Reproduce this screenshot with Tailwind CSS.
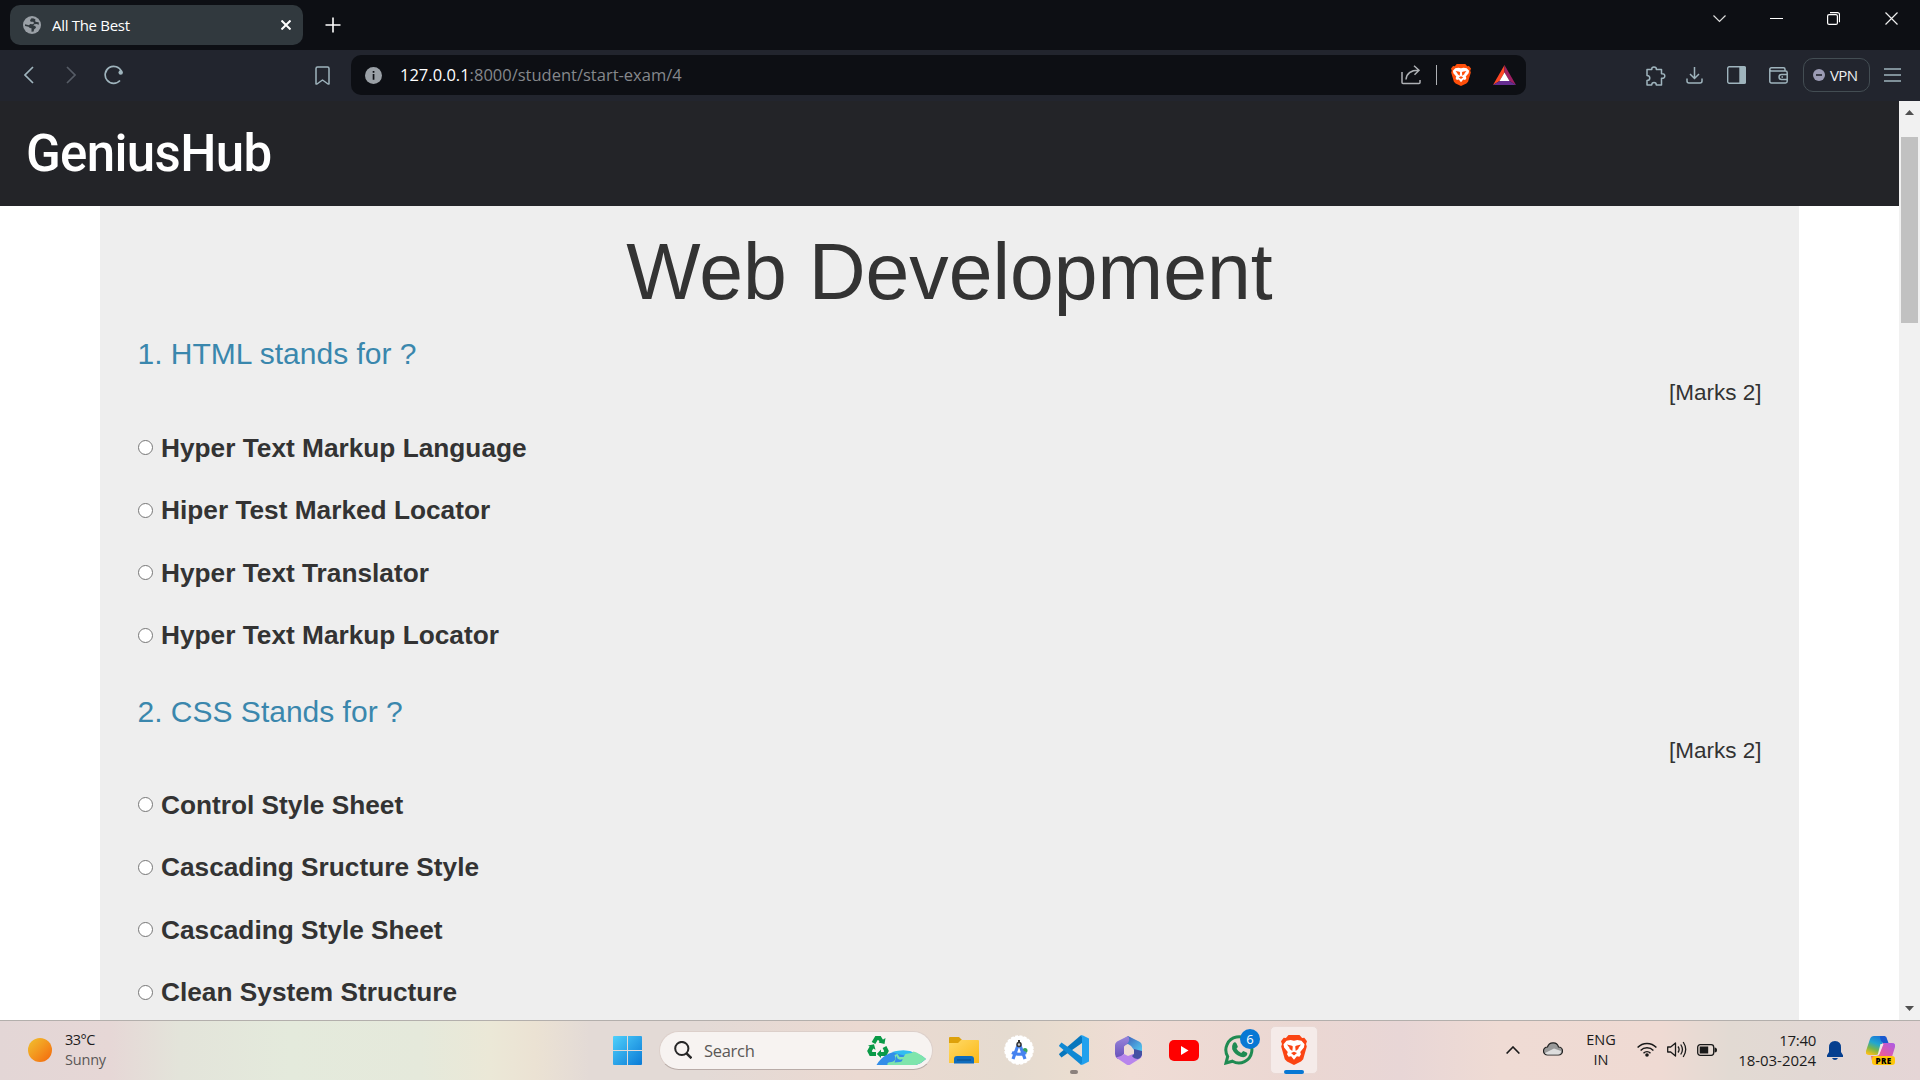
<!DOCTYPE html>
<html lang="en">
<head>
<meta charset="utf-8">
<title>All The Best</title>
<script src="https://cdn.jsdelivr.net/npm/@tailwindcss/browser@4"></script>
</head>
<body class="w-[1920px] h-[1080px] overflow-hidden flex flex-col bg-white font-['Open_Sans',sans-serif]">

<!-- Tab strip -->
<div class="h-[50px] shrink-0 bg-[#0d0f14] flex items-start">
  <div class="mt-[5px] ml-[10px] w-[293px] h-10 rounded-[10px] bg-[#31393e] flex items-center pl-[13px] pr-3">
    <svg class="w-[18px] h-[18px]" viewBox="0 0 18 18"><circle cx="9" cy="9" r="9" fill="#9aa0a6"/><path fill="#31393e" d="M8.500 2.200L7 4.200l.7 1.600h2.500l1 1.500-1.700 1-2.300-.2L6 9.200l-4-.9v1.600l3.500.8 1.300 1.300 1.700.3v3.500l2.200-.4.3-2 2-1.700-.7-1.700-2-.5 1-1.200 2.200-.3 2.400.8-.2-2.500-2.200-.4L12 5.300l.5-1.800-1.600-1z"/></svg>
    <div class="ml-[11px] text-[15px] leading-5 tracking-[-0.300px] text-white">All The Best</div>
    <svg class="ml-auto w-[10px] h-[10px]" viewBox="0 0 10 10" stroke="#fff" stroke-width="2"><path d="M.5.5l9 9m0-9l-9 9"/></svg>
  </div>
  <svg class="mt-[17px] ml-[21.5px] w-4 h-4" viewBox="0 0 16 16" stroke="#fff" stroke-width="1.600"><path d="M8 .5v15M.5 8h15"/></svg>
  <svg class="mt-[15px] ml-auto w-[13px] h-2" viewBox="0 0 13 8" fill="none" stroke="#ddd" stroke-width="1.200"><path d="M.5.5l6 6 6-6"/></svg>
  <div class="mt-[18px] ml-[44px] w-[13px] h-px bg-white"></div>
  <svg class="mt-3 ml-[44px] w-[13px] h-[13px]" viewBox="0 0 13 13" fill="none" stroke="#fff" stroke-width="1.200"><rect x=".6" y="2.600" width="9.800" height="9.800" rx="1.500"/><path d="M3 .6h7.500a2 2 0 0 1 2 2v7.700"/></svg>
  <svg class="mt-3 ml-[45px] mr-[22px] w-[13px] h-[13px]" viewBox="0 0 13 13" stroke="#eee" stroke-width="1.200"><path d="M.5.500l12 12m0-12l-12 12"/></svg>
</div>

<!-- Toolbar -->
<div class="h-[51px] shrink-0 bg-[#22252e] flex items-center pb-px text-[#9fb4bd]">
  <svg class="ml-6 w-[10px] h-[18px]" viewBox="0 0 10 18" fill="none" stroke="currentColor" stroke-width="1.700"><path d="M9 1L1 9l8 8"/></svg>
  <svg class="ml-8 w-[10px] h-[18px]" viewBox="0 0 10 18" fill="none" stroke="#565c66" stroke-width="1.700"><path d="M1 1l8 8-8 8"/></svg>
  <svg class="ml-7 w-5 h-5" viewBox="0 0 20 20" fill="none" stroke="currentColor" stroke-width="1.700"><path d="M17.500 6.500A8.500 8.500 0 1 0 16 15.500"/><circle cx="16.700" cy="7.500" r="2.200" fill="currentColor" stroke="none"/></svg>
  <svg class="ml-[191px] w-[15px] h-[19px]" viewBox="0 0 15 19" fill="none" stroke="currentColor" stroke-width="1.500" stroke-linejoin="round"><path d="M1 2.500Q1 1 2.500 1h10Q14 1 14 2.500V18h-1L7.500 14 2 18H1z"/></svg>
  <div class="ml-[21px] w-[1175px] h-10 rounded-[10px] bg-[#0d0f14] flex items-center">
    <svg class="ml-[14px] w-[17px] h-[17px]" viewBox="0 0 17 17"><circle cx="8.500" cy="8.500" r="8.500" fill="#9aa0a6"/><path fill="#0d0f14" d="M7.700 4h1.700v1.700H7.700zM7.700 7h1.700v5.800H7.700z"/></svg>
    <div class="ml-[18px] text-[16.5px] leading-6 text-[#85888c]"><span class="text-white">127.0.0.1</span>:8000/student/start-exam/4</div>
    <svg class="ml-auto w-5 h-5" viewBox="0 0 20 20" fill="none" stroke="#aeb1b5" stroke-width="1.500"><path d="M1 7v10.500q0 1 1 1h16q1 0 1-1V15M5 14.500C5.500 9 9 5.200 17.500 5.200M13 .8l5 4.400-4.500 4.500"/></svg>
    <div class="ml-[15px] w-px h-5 bg-[#aeb1b5]"></div>
    <svg class="ml-[14px] w-5 h-[22px]" viewBox="0 0 26 29" preserveAspectRatio="none" fill="#ff4f0a">
      <path d="M7.500 0h11l2.600 3 2.200-.4L26 6l-1 2.800.8 2.400-3.600 12.300-2.200 2.200L13 29l-7-3.300-2.200-2.200L.2 11.200 1 8.800 0 6l2.700-3.400 2.200.4z"/>
      <path fill="#fff" d="M13 5.600l3.300-.7 4.200.6 3 3.500-.6 3.200-3.700 4.300.8 2.200-1.600 2.300-2.500-.5L13 24l-2.900-3.500-2.500.5L6 18.700l.8-2.200-3.700-4.300L2.500 9l3-3.500 4.200-.6z"/>
      <path d="M6 9.300l5 1 .8.800-.5 4.300-2.600-1.800-.3-1.200zM20 9.300l-5 1-.8.800.5 4.300 2.600-1.800.3-1.200zM10 17.500l3-1.300 3 1.300-3 2.200z"/>
    </svg>
    <svg class="ml-[22px] mr-[10px] w-[23px] h-5" viewBox="0 0 23 20"><path fill="#ff4724" d="M11.500 0L0 20l6.500-4 5-8.500z"/><path fill="#9e1f63" d="M11.500 0L23 20l-6.500-4-5-8.500z"/><path fill="#662d91" d="M0 20h23l-6.500-4h-10z"/><path fill="#fff" d="M11.500 7.500l5 8.500h-10z"/></svg>
  </div>
  <svg class="ml-[119px] mt-px w-[21px] h-5" viewBox="0 0 21 20" fill="none" stroke="currentColor" stroke-width="1.500" stroke-linejoin="round"><path d="M2 3.500h4.800C6.500 1.800 7.500 1 9 1s2.600.8 2.300 2.500h5.200v4.200c2-.2 3.300.7 3.300 2.300s-1.300 2.500-3.300 2.300V19h-5.200c0-1.600-.8-2.400-2.300-2.400S6.800 17.400 6.700 19H2v-4.500c1.800 0 2.800-.9 2.800-2.500S3.800 9.600 2 9.500z"/></svg>
  <svg class="ml-5 w-[17px] h-[17px]" viewBox="0 0 17 17" fill="none" stroke="currentColor" stroke-width="1.500"><path d="M8.500 0v11M4 7l4.500 4.500L13 7M1 11.500v2.500q0 2 2 2h11q2 0 2-2v-2.500"/></svg>
  <svg class="ml-6 w-[19px] h-[18px]" viewBox="0 0 19 18" fill="none" stroke="currentColor" stroke-width="1.400"><rect x=".7" y=".7" width="17.600" height="16.600" rx="1.500"/><path d="M13 1h4.500q.8 0 .8.800v14.400q0 .8-.8.800H13z" fill="currentColor"/></svg>
  <svg class="ml-[23px] w-[19px] h-[17px]" viewBox="0 0 19 17" fill="none" stroke="currentColor" stroke-width="1.500"><path d="M.8 2.500Q.8 4 2.500 4H16.500q1.700 0 1.700 1.700v8.600q0 1.700-1.700 1.700H2.500Q.8 16 .8 14.300V2.500Q.8.8 2.500.8H14.500q1.500 0 1.500 1.500V4M18 7.500h-5.500a2.500 2.500 0 0 0 0 5H18M12.500 10h1.500"/></svg>
  <div class="ml-[15px] w-[67px] h-[34px] rounded-[10px] border border-[#434d53] flex items-center pl-[9px]">
    <svg class="w-3 h-3" viewBox="0 0 12 12"><circle cx="6" cy="6" r="6" fill="#9b9bb4"/><path d="M3 6h6" stroke="#22252e" stroke-width="1.600"/></svg>
    <span class="ml-[5px] text-[15px] leading-5 text-[#eceef0] tracking-[-0.600px]">VPN</span>
  </div>
  <svg class="ml-[14px] w-[17px] h-[14px]" viewBox="0 0 17 14" stroke="currentColor" stroke-width="1.500"><path d="M0 1h17M0 7h17M0 13h17"/></svg>
</div>

<!-- Page viewport -->
<div class="h-[919px] shrink-0 flex">
  <div class="w-[1899px] h-[919px] overflow-hidden font-['Liberation_Sans',Arial,sans-serif] text-[#333]">
    <div class="h-[105px] bg-[#232428] flex items-center pl-[26px]">
      <div class="font-[Roboto] font-medium text-[51px] leading-[60px] tracking-[-0.650px] text-white">GeniusHub</div>
    </div>
    <div class="mx-[100px] h-[814px] px-[37.5px] bg-[#eee]">
      <h1 class="h-[130px] text-center text-[78.75px] leading-[132px]">Web Development</h1>
      <div class="h-[358px]">
        <h3 class="text-[30px] leading-[35px] text-[#3a87ad]">1. HTML stands for ?</h3>
        <div class="text-right text-[22.5px] leading-[44px] mb-[1.300px]">[Marks 2]</div>
        <label class="h-[62.5px] flex items-center font-bold text-[26.25px] leading-[30px]"><span class="w-[15px] h-[15px] mr-[8.5px] rounded-full border border-[#767676] bg-white"></span>Hyper Text Markup Language</label>
        <label class="h-[62.5px] flex items-center font-bold text-[26.25px] leading-[30px]"><span class="w-[15px] h-[15px] mr-[8.5px] rounded-full border border-[#767676] bg-white"></span>Hiper Test Marked Locator</label>
        <label class="h-[62.5px] flex items-center font-bold text-[26.25px] leading-[30px]"><span class="w-[15px] h-[15px] mr-[8.5px] rounded-full border border-[#767676] bg-white"></span>Hyper Text Translator</label>
        <label class="h-[62.5px] flex items-center font-bold text-[26.25px] leading-[30px]"><span class="w-[15px] h-[15px] mr-[8.5px] rounded-full border border-[#767676] bg-white"></span>Hyper Text Markup Locator</label>
      </div>
      <div class="h-[358px]">
        <h3 class="text-[30px] leading-[35px] text-[#3a87ad]">2. CSS Stands for ?</h3>
        <div class="text-right text-[22.5px] leading-[44px] mb-[0.600px]">[Marks 2]</div>
        <label class="h-[62.5px] flex items-center font-bold text-[26.25px] leading-[30px]"><span class="w-[15px] h-[15px] mr-[8.5px] rounded-full border border-[#767676] bg-white"></span>Control Style Sheet</label>
        <label class="h-[62.5px] flex items-center font-bold text-[26.25px] leading-[30px]"><span class="w-[15px] h-[15px] mr-[8.5px] rounded-full border border-[#767676] bg-white"></span>Cascading Sructure Style</label>
        <label class="h-[62.5px] flex items-center font-bold text-[26.25px] leading-[30px]"><span class="w-[15px] h-[15px] mr-[8.5px] rounded-full border border-[#767676] bg-white"></span>Cascading Style Sheet</label>
        <label class="h-[62.5px] flex items-center font-bold text-[26.25px] leading-[30px]"><span class="w-[15px] h-[15px] mr-[8.5px] rounded-full border border-[#767676] bg-white"></span>Clean System Structure</label>
      </div>
    </div>
  </div>
  <div class="w-[21px] bg-[#f1f1f1] flex flex-col items-center pr-px">
    <svg class="mt-[9px] w-[9px] h-[5px]" viewBox="0 0 9 5" fill="#505050"><path d="M4.500 0L9 5H0z"/></svg>
    <div class="mt-[22px] w-[17px] h-[186px] bg-[#c1c1c1]"></div>
    <svg class="mt-auto mb-[9px] w-[9px] h-[5px]" viewBox="0 0 9 5" fill="#505050"><path d="M4.500 5L9 0H0z"/></svg>
  </div>
</div>

<!-- Taskbar -->
<div class="h-[60px] shrink-0 border-t border-[#b3afac] flex items-center pb-px bg-[linear-gradient(90deg,#e3d6d6_0px,#e6d7d6_110px,#e3e4da_180px,#e4eadc_290px,#e5e9db_420px,#ebe8d7_490px,#ebe2d3_535px,#e3dad6_590px,#e3dad6_700px,#ebd9d1_860px,#e5dbd0_1010px,#eaddd0_1070px,#efdcd5_1130px,#ebd7d2_1300px,#e8d6d6_1400px,#efdbd4_1500px,#efdad3_1660px,#e2dad3_1730px,#e2d8d4_1810px,#e5d5d6_1920px)]">
  <div class="ml-7 w-6 h-6 rounded-full bg-linear-to-br from-[#efc22f] to-[#f2640a]"></div>
  <div class="ml-[13px] w-[60px] text-[14.5px] leading-5 tracking-[-0.5px] text-[#1c1c1c]"><div>33°C</div><div class="text-[#5a5757] tracking-[-0.200px]">Sunny</div></div>
  <svg class="ml-[488px] w-[29px] h-[29px]" viewBox="0 0 29 29"><defs><linearGradient id="win" x1="0" y1="0" x2="1" y2="1" gradientUnits="objectBoundingBox"><stop stop-color="#4fd0fb"/><stop offset="1" stop-color="#0a7ad6"/></linearGradient></defs><path fill="url(#win)" d="M1 0h13v14H0V1q0-1 1-1zM15 0h13q1 0 1 1v13H15zM0 15h14v14H1q-1 0-1-1zM15 15h14v13q0 1-1 1H15z"/></svg>
  <div class="ml-[17px] w-[274px] h-[39px] rounded-full bg-[#f7f3f1] border border-[#dccfca] border-b-[#b9aca8] flex items-center">
    <svg class="ml-[14px] w-[18px] h-[18px]" viewBox="0 0 18 18" fill="none" stroke="#262626" stroke-width="2"><circle cx="7.800" cy="7.500" r="6.600"/><path d="M12.500 12.300l5 5" stroke-width="2.500"/></svg>
    <span class="ml-3 mt-px text-[16.5px] leading-6 tracking-[-0.300px] text-[#5b5856]">Search</span>
    <svg class="ml-auto mr-[6px] w-[59px] h-8" viewBox="0 0 59 32">
      <g fill="none" stroke="#0a9a47" stroke-width="4.200"><path d="M6.500 9L9.500 4h3L15 8"/><path d="M17.500 13l2 4-1.500 3h-5"/><path d="M9 20H4l-1.500-3L5 12.500"/></g>
      <path fill="#0a9a47" d="M11.500 8.500l6 1.500 1-6zM14 15.500L9.800 20l4.200 4zM1 11.500l6-1.300 1.500 5.600z"/>
      <path fill="#338ee8" d="M9.500 31Q17 18 33 17 49 16 59 25q-4 4-10 6z"/><path fill="#32bdf0" d="M25 18q14-4 23 1l-8 3-9-2z"/>
      <path fill="#7fe5ac" d="M20.500 31q-1-3 4-3 4-1 4-4l-1-3 3-1 2 3 4 0 2-3 6-1 2-1.500q6 1.500 12.500 7.500-4 4-10 6z"/><path fill="#338ee8" d="M29.500 21.500l1 3q2 2 5 .5 0 3-3 3l-5 .5 1-3z"/>
    </svg>
  </div>
  <svg class="ml-4 w-[30px] h-[27px]" viewBox="0 0 30 27"><defs><linearGradient id="fol" x1="0" y1="0" x2="1" y2="1"><stop stop-color="#ffda67"/><stop offset="1" stop-color="#fbb817"/></linearGradient></defs><path fill="#dda10b" d="M0 1q0-1 1-1h9l3 3v4H0z"/><path fill="url(#fol)" d="M0 6h9l3-3h17q1 0 1 1v22H0z"/><path fill="#0f6cbd" d="M5 26.500V22q0-3 3-3h14q3 0 3 3v4.500z"/><path fill="#0a4a85" d="M8 22.500h14v1H8z"/></svg>
  <svg class="ml-[25px] w-[30px] h-[30px]" viewBox="0 0 30 30"><circle cx="15" cy="15" r="14" fill="#fff" stroke="#fff" stroke-width="1.500" stroke-dasharray="3 1.400"/><circle cx="21" cy="15.500" r="2.500" fill="#3ba55c"/><path d="M14.500 9L9 24M15.500 9L21 24M8 17.500q7 3.500 14 0" fill="none" stroke="#4683f0" stroke-width="3.200"/><path d="M15 5v3" stroke="#333" stroke-width="2"/><circle cx="15" cy="9.500" r="2" fill="#ccc" stroke="#333" stroke-width="1.500"/></svg>
  <div class="relative ml-[25px] w-[30px] h-[30px]">
    <svg class="w-[30px] h-[30px]" viewBox="0 0 30 30"><path fill="#0877bd" d="M0 19.500l2.500 3L23 8V.5L21 1 .5 18.500z"/><path fill="#1089d4" d="M0 10.500l2.500-3L23 22v7.500L21 29 .5 11.500z"/><path fill="#22a1ee" d="M21 29.500Q22.500 30 24 29.500l6-3v-23l-6-3Q22.500 0 21 .5l2 1.500v26z"/></svg>
    <div class="absolute left-[11px] top-[35px] w-2 h-1 rounded-full bg-[#8b817c]"></div>
  </div>
  <svg class="ml-[26px] w-[27px] h-[29px]" viewBox="0 0 27 29"><defs><linearGradient id="ma" x1="0" y1="0" x2="0" y2="1"><stop stop-color="#9a86dc"/><stop offset="1" stop-color="#6650b8"/></linearGradient><linearGradient id="mb" x1="0" y1="0" x2="1" y2="1"><stop stop-color="#3c56b4"/><stop offset="1" stop-color="#56d2f5"/></linearGradient></defs><path fill="url(#mb)" d="M13 0l12 6q2 1.500 2 4v7l-8-3-3-4-3-2-4 1V3z"/><path fill="url(#ma)" d="M13 0q3 4-1 8l-3 2.500V18L3 23Q0 21 0 18V9q0-2 2-3.500z"/><path fill="#b885ec" d="M1 21.500q5-.5 8-3.500l4 2 5-2 9-2v3q0 2-2 3.500l-9.500 6q-2 1-4 0z"/><path fill="#4551a3" d="M19 13l8 2v4q-1 3-4 4-4 0-6-3l2-2z"/></svg>
  <svg class="ml-[27px] w-[30px] h-[21px]" viewBox="0 0 30 21"><rect width="30" height="21" rx="5" fill="#f00"/><path fill="#fff" d="M12 6l7.500 4.500L12 15z"/></svg>
  <div class="relative ml-[25px] w-[30px] h-[30px]">
    <svg class="w-[30px] h-[30px]" viewBox="0 0 30 30"><path fill="none" stroke="#1f8b52" stroke-width="3" d="M2 28l1.700-6.500A13 13 0 1 1 8.500 26.200z"/><path fill="#1f8b52" d="M9 8.500q2-2.500 3.500 0l1.300 3q0 1-1.300 2.200 1.800 3 4.700 4.300l2-2 3.500 1.500q1.500 1 0 3-2 2.500-6 1.200-6-2-8.500-7.500Q7.500 11 9 8.500z"/></svg>
    <div class="absolute left-4 -top-[6px] w-5 h-5 rounded-full bg-[#0878d4] text-white text-[13px] leading-5 text-center">6</div>
  </div>
  <div class="relative ml-4 w-12 h-12 rounded-[5px] bg-[#f5ebe9] border border-[#ead9d5] flex items-center justify-center">
    <svg class="w-[26px] h-[30px]" viewBox="0 0 26 29" preserveAspectRatio="none" fill="#fb4413">
      <path d="M7.500 0h11l2.600 3 2.200-.4L26 6l-1 2.800.8 2.400-3.600 12.300-2.200 2.200L13 29l-7-3.300-2.200-2.200L.2 11.200 1 8.800 0 6l2.700-3.400 2.200.4z"/>
      <path fill="#fff" d="M13 5.600l3.300-.7 4.200.6 3 3.500-.6 3.200-3.700 4.300.8 2.200-1.600 2.300-2.500-.5L13 24l-2.900-3.500-2.500.5L6 18.700l.8-2.200-3.700-4.300L2.500 9l3-3.500 4.200-.6z"/>
      <path d="M6 9.300l5 1 .8.800-.5 4.300-2.600-1.800-.3-1.200zM20 9.300l-5 1-.8.800.5 4.300 2.600-1.800.3-1.200zM10 17.500l3-1.300 3 1.300-3 2.200z"/>
    </svg>
    <div class="absolute left-[13px] bottom-[-1px] w-5 h-1 rounded-full bg-[#0878d4]"></div>
  </div>
  <svg class="ml-auto w-[14px] h-2" viewBox="0 0 14 8" fill="none" stroke="#1a1a1a" stroke-width="1.600"><path d="M.6 7.500L7 1l6.400 6.500"/></svg>
  <svg class="ml-[23px] mb-[2px] w-5 h-[14px]" viewBox="0 0 20 14"><path d="M4.500 13a4 4 0 0 1 0-8q1-4 5.500-4.200T15.500 5a4 4 0 0 1 0 8z" fill="#999" stroke="#222" stroke-width="1.200"/><path fill="#ddd" d="M2 11l9-4.500L18 9q0 3.400-3 3.400H4.500Q2.500 12.400 2 11z"/></svg>
  <div class="ml-[19px] w-[38px] text-center text-[14.5px] leading-5 text-[#1c1c1c]"><div>ENG</div><div>IN</div></div>
  <svg class="ml-[17px] mb-[2px] w-[20px] h-[15px]" viewBox="0 0 20 15" fill="none" stroke="#1a1a1a" stroke-width="1.500"><path d="M.6 5.500a13 13 0 0 1 18.800 0M3.600 8.500a9 9 0 0 1 12.800 0M6.500 11.200a5 5 0 0 1 7 0"/><circle cx="10" cy="13" r="1.800" fill="#1a1a1a" stroke="none"/></svg>
  <svg class="ml-[10px] mb-[2px] w-5 h-[17px]" viewBox="0 0 20 17" fill="none" stroke="#1a1a1a" stroke-width="1.300" stroke-linejoin="round"><path d="M.7 6v5h3L8.500 15V2L3.700 6zM11 5.500q2.200 3 0 6M13.700 3.500q3.500 5 0 10M16.200 1q5 7.500 0 15"/></svg>
  <svg class="ml-[10px] w-5 h-3" viewBox="0 0 20 12"><rect x=".7" y=".7" width="16" height="10.600" rx="2.500" fill="none" stroke="#1a1a1a" stroke-width="1.300"/><rect x="2.700" y="2.500" width="8.500" height="7" fill="#1a1a1a"/><path d="M17.500 3.500q2.500 0 2.500 2.500t-2.500 2.500z" fill="#1a1a1a"/></svg>
  <div class="w-[99px] text-right text-[15px] leading-5 text-[#1c1c1c]"><div class="tracking-[-0.300px]">17:40</div><div class="tracking-[-0.050px]">18-03-2024</div></div>
  <svg class="ml-[11px] w-4 h-[19px]" viewBox="0 0 16 19" fill="#053f8f"><path d="M8 0q6 0 6 6.500V11l2 3.200V16H0v-1.800L2 11V6.500Q2 0 8 0zM5 17h6q-1 2-3 2t-3-2z"/></svg>
  <div class="relative ml-[23px] mr-[25px] w-[29px] h-[29px]">
    <svg class="w-[29px] h-[29px]" viewBox="0 0 29 29"><defs><linearGradient id="ca" x1=".7" y1="0" x2=".3" y2="1"><stop stop-color="#1976d8"/><stop offset=".4" stop-color="#22a7cf"/><stop offset=".7" stop-color="#79b54a"/><stop offset="1" stop-color="#f6bf18"/></linearGradient><linearGradient id="cb" x1="1" y1="0" x2="0" y2="1"><stop stop-color="#a95be8"/><stop offset=".5" stop-color="#e45aa4"/><stop offset="1" stop-color="#ff7a4a"/></linearGradient></defs><path fill="url(#ca)" d="M8 0h11l-6 17q-1 2-3 2H3q-4 0-3-4L4 3q1-3 4-3z"/><path fill="#1a58cf" d="M14 0h4q2.500 0 3 3l1.500 4H17q-3-2-3-7z"/><path fill="url(#cb)" d="M17 7h9q4 0 3 4l-4 13q-1 4-4 4H9q-3 0-4-8h5q3 0 4-4z"/><path fill="#f3e6e6" d="M14.500 8h3l-4 10q-.5 1.500-2 1.500z"/></svg>
    <div class="absolute left-[6px] bottom-0 w-[23px] h-[9px] rounded-[3px] bg-[#ffc60a] text-[8px] leading-[9px] font-extrabold tracking-[0.300px] text-center text-black">PRE</div>
  </div>
</div>
</body>
</html>
